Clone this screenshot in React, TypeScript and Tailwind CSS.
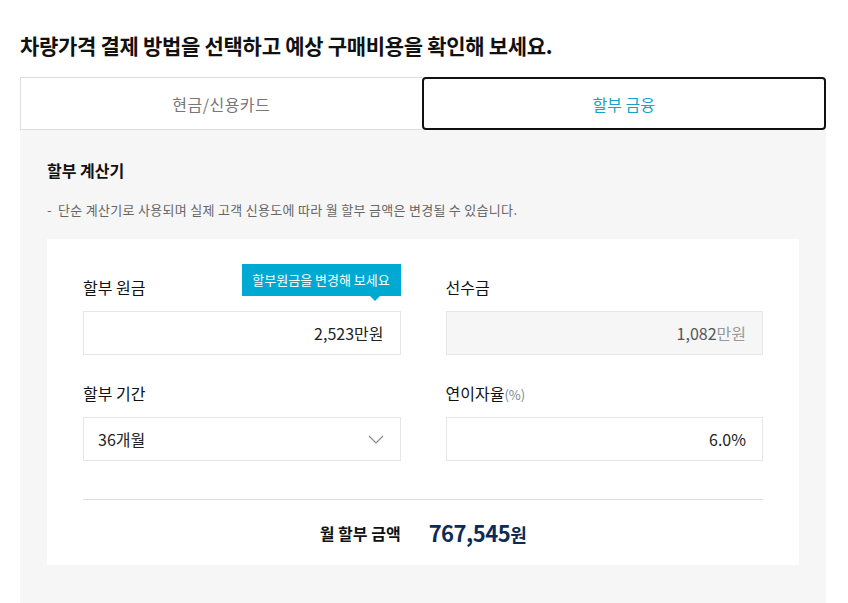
import React from "react";

const font = { fontFamily: '"Noto Sans CJK KR", "Noto Sans", sans-serif' };

function Field({
  label,
  children,
  tooltip,
}: {
  label: React.ReactNode;
  children: React.ReactNode;
  tooltip?: string;
}) {
  return (
    <div className="relative">
      <div className="h-6 text-[16px] leading-6 text-[#111]">{label}</div>
      {tooltip && (
        <div className="absolute right-0 top-[-11px] flex h-8 w-[159px] items-center justify-center bg-[#00a9d2] text-[13px] text-white">
          {tooltip}
          <span className="absolute bottom-[-5px] right-[21px] h-0 w-0 border-x-[5px] border-t-[5px] border-x-transparent border-t-[#00a9d2]" />
        </div>
      )}
      <div className="mt-3">{children}</div>
    </div>
  );
}

export default function App() {
  return (
    <div className="min-h-[603px] bg-white pl-5 pr-[22px] pt-[30px]" style={font}>
      <h1 className="h-[30px] text-[21px] font-bold leading-[30px] tracking-[-0.3px] text-[#111]">
        차량가격 결제 방법을 선택하고 예상 구매비용을 확인해 보세요.
      </h1>

      <div className="mt-[17px] flex h-[53px]">
        <button className="flex-1 border border-r-0 border-[#dddddd] text-[16px] tracking-[0.5px] text-[#777]">
          현금/신용카드
        </button>
        <button className="flex-1 rounded-[4px] border-2 border-[#111] text-[16px] text-[#16a2c8]">
          할부 금융
        </button>
      </div>

      <div className="bg-[#f6f6f6] px-[27px] pb-[40px] pt-[28px]">
        <h2 className="text-[16px] font-bold leading-6 text-[#111]">할부 계산기</h2>
        <p className="mt-[19px] flex text-[13px] leading-[18px] tracking-[0.3px] text-[#666]">
          <span className="w-[11px]">-</span>
          단순 계산기로 사용되며 실제 고객 신용도에 따라 월 할부 금액은 변경될 수 있습니다.
        </p>

        <div className="mt-5 bg-white px-9 pt-[36px]">
          <div className="grid grid-cols-2 gap-x-[45px] gap-y-[26px]">
            <Field label="할부 원금" tooltip="할부원금을 변경해 보세요">
              <div className="flex h-11 items-center justify-end border border-[#e6e6e6] px-4 text-[16px] text-[#222]">
                2,523만원
              </div>
            </Field>
            <Field label="선수금">
              <div className="flex h-11 items-center justify-end border border-[#e6e6e6] bg-[#f6f6f6] px-4 text-[16px] text-[#555]">
                1,082<span className="text-[#999]">만원</span>
              </div>
            </Field>
            <Field label="할부 기간">
              <div className="flex h-11 items-center justify-between border border-[#e6e6e6] pl-[14px] pr-4 text-[16px] text-[#222]">
                36개월
                <svg width="16" height="9" viewBox="0 0 16 9" fill="none">
                  <path d="M1 1l7 7 7-7" stroke="#888" strokeWidth="1.2" />
                </svg>
              </div>
            </Field>
            <Field
              label={
                <>
                  연이자율<span className="text-[13px] text-[#7a8794]">(%)</span>
                </>
              }
            >
              <div className="flex h-11 items-center justify-end border border-[#e6e6e6] px-4 text-[16px] text-[#222]">
                6.0%
              </div>
            </Field>
          </div>

          <div className="mt-[38px] border-t border-[#dddddd]" />
          <div className="flex h-[65px] items-center justify-center gap-[28px]">
            <span className="text-[16px] font-bold text-[#111]">월 할부 금액</span>
            <span className="text-[22px] font-bold tracking-[-0.5px] text-[#0d2b57]">
              767,545<span className="text-[18px]">원</span>
            </span>
          </div>
        </div>
      </div>
    </div>
  );
}
